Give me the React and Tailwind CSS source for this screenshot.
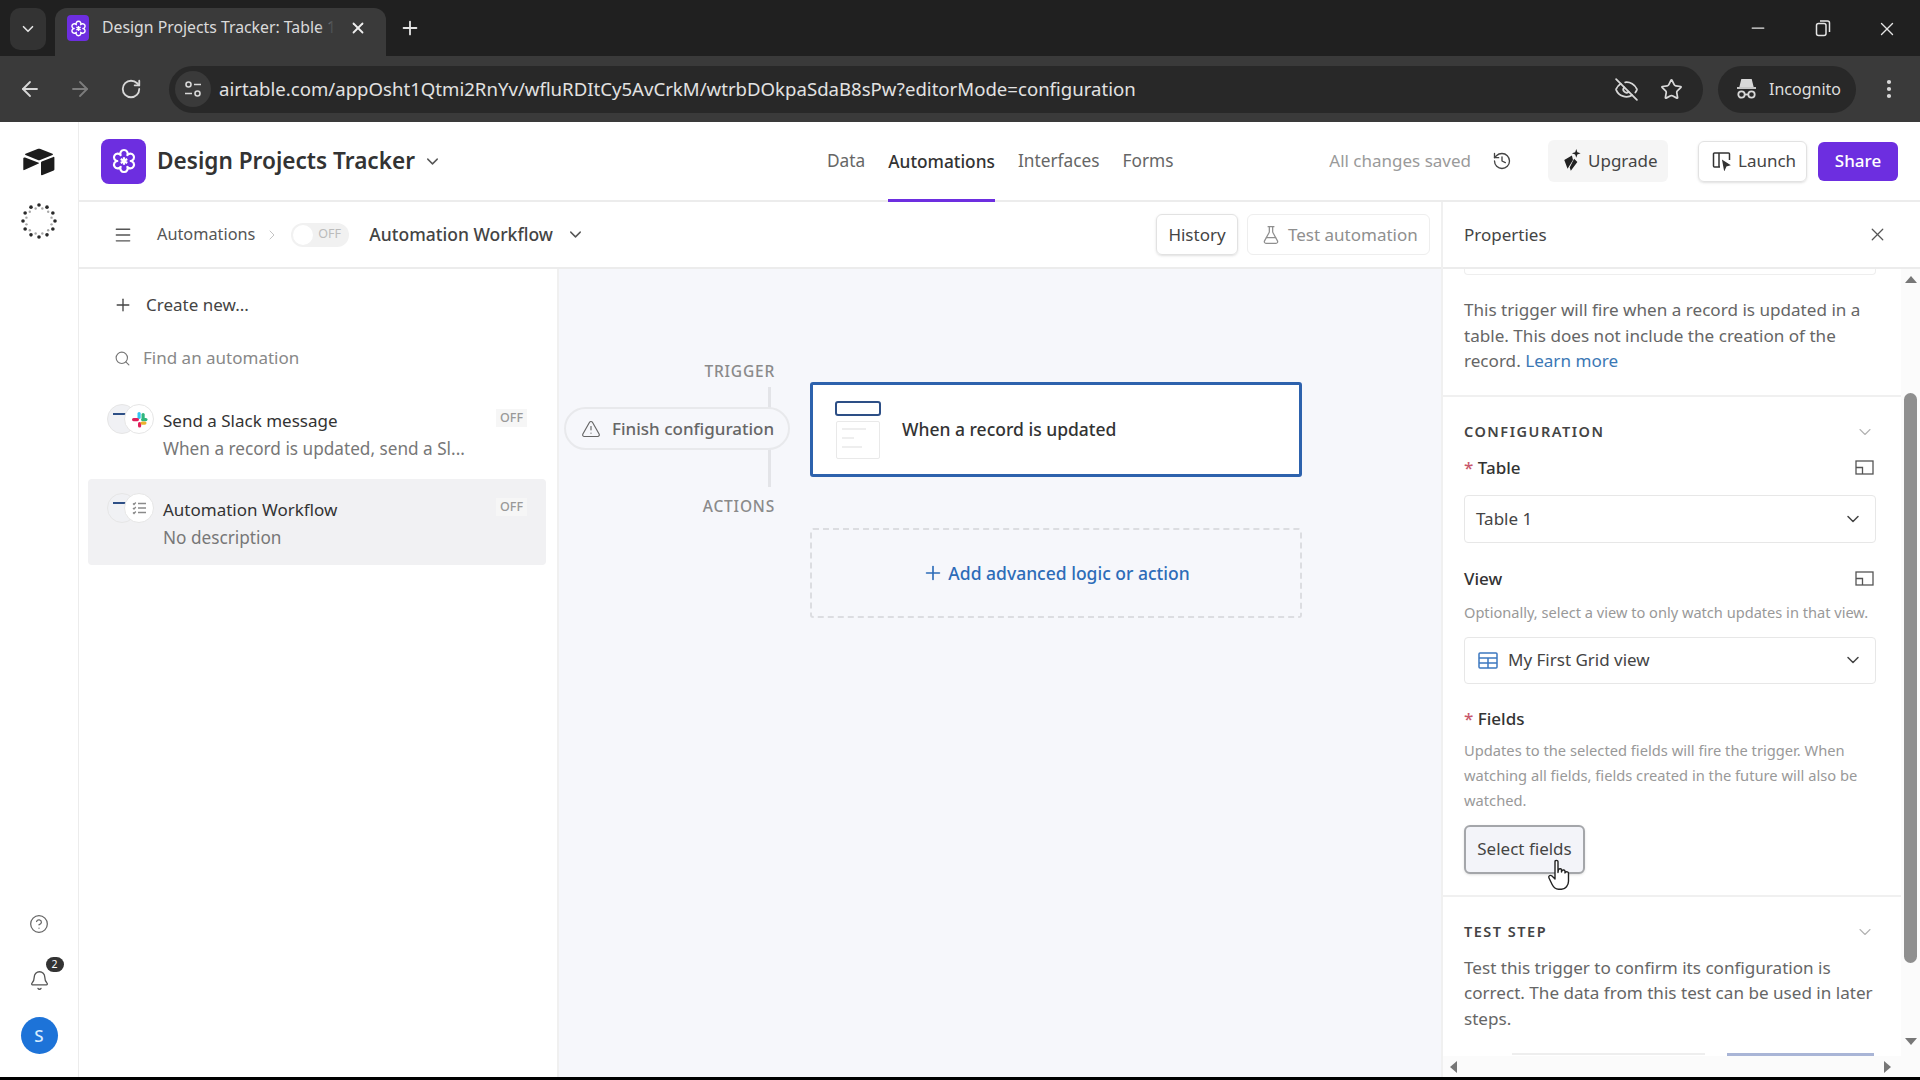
import {
  ArrowLeft, ArrowRight, Bell, ChevronDown, ChevronRight, CircleHelp, EyeOff, FlaskConical, History,
  Menu, Minus, MoreVertical, Plus, RotateCw, Search, Star, TriangleAlert, X,
} from 'lucide-react'

const SANS = { fontFamily: '"Noto Sans", "Open Sans", sans-serif' }

// six petals, arcs running between the valley points
const FLOWER_PATH = Array.from({ length: 7 }, (_, i) => {
  const a = (i * 60 * Math.PI) / 180
  const x = (12 + Math.cos(a) * 6.2).toFixed(2)
  const y = (12 + Math.sin(a) * 6.2).toFixed(2)
  return i === 0 ? `M${x} ${y}` : `A3.400 3.400 0 1 1 ${x} ${y}`
}).join(' ') + 'z'

function FlowerIcon({ size = 26, stroke = 'white' }) {
  return (
    <svg width={size} height={size} viewBox="0 0 24 24" fill="none" stroke={stroke} strokeWidth="2" strokeLinejoin="round">
      <path d={FLOWER_PATH} />
      <path d="M12 8.500v7M9 10.200l6 3.600M15 10.200l-6 3.600" />
    </svg>
  )
}

function AirtableLogo() {
  return (
    <svg width="32" height="28" viewBox="0 0 32 28" fill="#1c1c1c">
      <path d="M14.500 1 2.500 5.800c-.6.3-.6 1 0 1.300l12.300 4.800c.8.300 1.600.3 2.400 0l12.300-4.800c.6-.3.6-1 0-1.300L17.500 1c-1-.4-2-.4-3 0z" />
      <path d="M18 14.500v12c0 .5.500.9 1 .7l11.700-4.700c.4-.2.700-.5.700-1V9.600c0-.6-.6-.9-1-.7L18.700 13.500c-.4.200-.7.500-.7 1z" />
      <path d="M15.300 15 .9 21.500c-.5.200-1 0-1-.6V10c0-.4.200-.6.400-.8L1 8.900c.2-.1.500-.1.700 0l13.600 5.300c.5.200.5.600 0 .8z" transform="translate(.4 .6)" />
    </svg>
  )
}

function Spinner() {
  const dots = Array.from({ length: 12 }, (_, i) => {
    const a = (i / 12) * Math.PI * 2
    return { x: 20 + Math.cos(a) * 16, y: 20 + Math.sin(a) * 16 }
  })
  const inner = Array.from({ length: 12 }, (_, i) => {
    const a = ((i + 0.5) / 12) * Math.PI * 2
    return { x: 20 + Math.cos(a) * 13, y: 20 + Math.sin(a) * 13 }
  })
  return (
    <svg width="40" height="40" viewBox="0 0 40 40">
      {dots.map((d, i) => <circle key={i} cx={d.x} cy={d.y} r="1.800" fill="#2a2a2a" />)}
      {inner.map((d, i) => <circle key={i} cx={d.x} cy={d.y} r="1.200" fill="#a8a8a8" />)}
    </svg>
  )
}

function SlackIcon() {
  return (
    <svg width="17" height="17" viewBox="0 0 17 17">
      <rect x="6.500" y="1" width="3.200" height="7" rx="1.600" fill="#36c5f0" />
      <rect x="1" y="7" width="7" height="3.200" rx="1.600" fill="#e01e5a" />
      <rect x="7" y="11" width="3.200" height="5.500" rx="1.600" fill="#e01e5a" />
      <rect x="10.500" y="2" width="3.200" height="6" rx="1.600" fill="#2eb67d" />
      <rect x="10" y="7" width="6.500" height="3.200" rx="1.600" fill="#2eb67d" />
      <rect x="9.500" y="10.500" width="6" height="3.200" rx="1.600" fill="#ecb22e" />
    </svg>
  )
}

function ListIcon() {
  return (
    <svg width="15" height="14" viewBox="0 0 15 14" fill="none" stroke="#8a8a8a" strokeWidth="1.300">
      <path d="M6 2.500h8M6 7h8M6 11.500h8M1 2.500l1 1 1.800-2M1 7l1 1 1.800-2M1 11.500l1 1 1.800-2" />
    </svg>
  )
}

function StepIcons({ second }) {
  return (
    <div className="relative w-[47px] h-[31px] shrink-0">
      <div className="absolute left-0 top-0 w-[30px] h-[30px] rounded-full bg-[#f0f1f4] border border-[#e6e6e6] overflow-hidden">
        <div className="absolute left-[5px] top-[8px] w-[15px] h-[2px] bg-[#2d4f86]" />
      </div>
      <div className="absolute left-[17px] top-0 w-[30px] h-[30px] rounded-full bg-white border border-[#e6e6e6] flex items-center justify-center">
        {second}
      </div>
    </div>
  )
}

function AutomationRow({ title, desc, icon, active }) {
  return (
    <div className={`ml-[9px] mr-[11px] h-[86px] rounded-[4px] flex items-start pl-[19px] pr-[19px] ${active ? 'mt-[3px] bg-[#f1f1f3]' : ''}`}>
      <div className="mt-[14px]"><StepIcons second={icon} /></div>
      <div className="ml-[9px] flex-1 min-w-0 pt-[17px]">
        <div className="text-[17px] leading-[28px] text-[#333]">{title}</div>
        <div className="text-[17.200px] leading-[28px] text-[#777] whitespace-nowrap">{desc}</div>
      </div>
      <div className="mt-[19px] px-[4px] text-[12.500px] leading-[18px] font-medium text-[#999] bg-[#f6f6f6]">OFF</div>
    </div>
  )
}

function LabelIcon() {
  return (
    <svg width="19" height="15" viewBox="0 0 19 15" fill="none" stroke="#555" strokeWidth="1.300">
      <rect x="1" y="1" width="17" height="13" />
      <path d="M1 7.500h6.500V14" />
    </svg>
  )
}

function SectionTitle({ children }) {
  return (
    <div className="h-[20px] flex items-center justify-between pr-[1px]">
      <span className="text-[14.500px] font-semibold tracking-[1.500px] text-[#444]">{children}</span>
      <ChevronDown size={20} strokeWidth={1.300} className="text-[#b3b3b3]" />
    </div>
  )
}

function SelectBox({ className, children }) {
  return (
    <div className={`border border-[#e7e7e7] rounded-[4px] flex items-center pl-[11px] pr-[12px] text-[17px] text-[#444] ${className}`}>
      {children}
      <ChevronDown size={20} strokeWidth={1.800} className="ml-auto text-[#444]" />
    </div>
  )
}

export default function App() {
  return (
    <div className="w-[1920px] h-[1080px] overflow-hidden flex flex-col bg-white" style={SANS}>
      {/* browser tab strip */}
      <div className="h-[56px] shrink-0 bg-[#202020] flex pt-[8px] pl-[10px] text-[#e4e4e4]">
        <div className="w-[36px] h-[42px] rounded-[10px] bg-[#333] flex items-center justify-center">
          <ChevronDown size={18} strokeWidth={2.200} />
        </div>
        <div className="ml-[9px] w-[331px] h-[48px] rounded-t-[12px] bg-[#3a3a3a] flex items-center pl-[12px] pb-[8px] relative">
          <div className="w-[22px] h-[26px] rounded-[4px] bg-[#6d2ee0] flex items-center justify-center"><FlowerIcon size={17} /></div>
          <div className="ml-[13px] w-[232px] overflow-hidden whitespace-nowrap text-[15.800px] text-[#dadada] relative">
            Design Projects Tracker: Table 1
            <div className="absolute right-0 top-0 bottom-0 w-[16px] bg-gradient-to-r from-transparent to-[#3a3a3a]" />
          </div>
          <X size={18} strokeWidth={2.400} className="ml-[15px] text-[#eee]" />
        </div>
        <Plus size={22} strokeWidth={2} className="ml-[13px] mt-[9px]" />
        <div className="ml-auto flex items-start pt-[10px] pr-[22px]">
          <Minus size={20} strokeWidth={1.500} />
          <svg width="18" height="20" viewBox="0 0 18 20" fill="none" stroke="#e4e4e4" strokeWidth="1.500" className="ml-[46px]">
            <rect x="2.500" y="5.500" width="9.500" height="12" rx="2" />
            <path d="M6 3h7.500a2 2 0 0 1 2 2v9" />
          </svg>
          <X size={22} strokeWidth={1.500} className="ml-[44px]" />
        </div>
      </div>

      {/* browser toolbar */}
      <div className="h-[66px] shrink-0 bg-[#3a3a3a] flex items-center pl-[18px] pr-[18px] text-[#d8d8d8]">
        <ArrowLeft size={24} strokeWidth={1.800} />
        <ArrowRight size={24} strokeWidth={1.800} className="ml-[26px] text-[#7c7c7c]" />
        <RotateCw size={22} strokeWidth={2} className="ml-[28px]" />
        <div className="ml-[27px] w-[1534px] h-[47px] rounded-full bg-[#282828] flex items-center pl-[6px] pr-[20px]">
          <div className="w-[36px] h-[36px] rounded-full bg-[#3a3a3a] flex items-center justify-center">
            <svg width="18" height="18" viewBox="0 0 18 18" fill="none" stroke="#d8d8d8" strokeWidth="1.600">
              <circle cx="4.500" cy="4.500" r="2.500" />
              <path d="M10 4.500h7M1 13.500h7" />
              <circle cx="13.500" cy="13.500" r="2.500" />
            </svg>
          </div>
          <span className="ml-[8px] text-[18.600px] text-[#e2e2e2] whitespace-nowrap">airtable.com/appOsht1Qtmi2RnYv/wfluRDItCy5AvCrkM/wtrbDOkpaSdaB8sPw?editorMode=configuration</span>
          <EyeOff size={25} strokeWidth={1.700} className="ml-auto" />
          <Star size={23} strokeWidth={1.800} className="ml-[21px]" />
        </div>
        <div className="ml-[15px] w-[138px] h-[47px] rounded-full bg-[#282828] flex items-center pl-[18px]">
          <svg width="21" height="22" viewBox="0 0 21 22" fill="none" stroke="#d8d8d8" strokeWidth="1.800">
            <path d="M6 2h9l1.500 6h-12z" fill="#d8d8d8" />
            <path d="M1 10h19" />
            <circle cx="5.500" cy="16.500" r="3.200" />
            <circle cx="15.500" cy="16.500" r="3.200" />
            <path d="M8.700 16.500h3.600" />
          </svg>
          <span className="ml-[12px] text-[16px] text-[#dedede]">Incognito</span>
        </div>
        <MoreVertical size={24} strokeWidth={2.200} className="ml-[21px]" />
      </div>

      <div className="flex-1 min-h-0 flex">
        {/* app rail */}
        <div className="w-[79px] shrink-0 border-r border-[#ececec] flex flex-col items-center pt-[26px] pb-[23px]">
          <AirtableLogo />
          <div className="mt-[25px]"><Spinner /></div>
          <CircleHelp size={20} strokeWidth={1.500} className="mt-auto text-[#666]" />
          <div className="relative mt-[36px]">
            <Bell size={21} strokeWidth={1.500} className="text-[#555]" />
            <div className="absolute -top-[13px] left-[17px] w-[18px] h-[15px] rounded-full bg-[#333] text-white text-[10.500px] leading-[15px] text-center">2</div>
          </div>
          <div className="mt-[26px] w-[37px] h-[37px] rounded-full bg-[#1d73d8] flex items-center justify-center text-[#d6ecff] text-[17px] font-medium">S</div>
        </div>

        <div className="flex-1 min-w-0 flex flex-col">
          {/* app header */}
          <div className="h-[80px] shrink-0 border-b-2 border-[#ececec] flex">
            <div className="w-[748px] shrink-0 flex items-center pl-[22px]">
              <div className="w-[45px] h-[45px] rounded-[8px] bg-[#6d2ee0] flex items-center justify-center"><FlowerIcon /></div>
              <span className="ml-[11px] text-[22.600px] font-semibold text-[#333]">Design Projects Tracker</span>
              <ChevronDown size={19} strokeWidth={1.800} className="ml-[8px] text-[#555]" />
            </div>
            <nav className="flex gap-[23px] text-[17.300px] text-[#666]">
              <span className="flex items-center">Data</span>
              <span className="flex items-center font-medium text-[#333] border-b-[3px] border-[#6d2ee0] relative top-[2px]">Automations</span>
              <span className="flex items-center">Interfaces</span>
              <span className="flex items-center">Forms</span>
            </nav>
            <div className="ml-auto flex items-center pr-[22px]">
              <span className="text-[17px] text-[#9a9a9a]">All changes saved</span>
              <History size={20} strokeWidth={1.600} className="ml-[21px] text-[#444]" />
              <div className="ml-[36px] w-[120px] h-[42px] rounded-[6px] bg-[#f5f5f5] flex items-center pl-[13px] text-[17px] text-[#444]">
                <svg width="24" height="24" viewBox="0 0 22 22" fill="#222">
                  <path d="M14 0l1 3 3 1-3 1-1 3-1-3-3-1 3-1zM3 10l7-4 1 4-5 8zM12 9l3 3-6 8-1-3z" />
                </svg>
                <span className="ml-[3px]">Upgrade</span>
              </div>
              <div className="ml-[30px] w-[109px] h-[41px] rounded-[6px] border border-[#e2e2e2] shadow-sm flex items-center pl-[13px] text-[17px] text-[#444]">
                <svg width="20" height="20" viewBox="0 0 20 20" fill="none" stroke="#333" strokeWidth="1.500">
                  <path d="M8 16H2.500a1 1 0 0 1-1-1V3a1 1 0 0 1 1-1h14a1 1 0 0 1 1 1v6M7 2v14" />
                  <path d="M11 10l6 4-3 .7L12.500 18z" fill="#333" />
                </svg>
                <span className="ml-[6px]">Launch</span>
              </div>
              <div className="ml-[11px] w-[80px] h-[39px] rounded-[6px] bg-[#6d2ee0] flex items-center justify-center text-[17px] font-medium text-white">Share</div>
            </div>
          </div>

          <div className="flex-1 min-h-0 flex">
            <div className="w-[1362px] shrink-0 flex flex-col">
              {/* automation bar */}
              <div className="h-[67px] shrink-0 border-b-2 border-[#ececec] flex items-center pl-[34px] pr-[11px]">
                <Menu size={20} strokeWidth={1.700} className="text-[#555]" />
                <span className="ml-[24px] text-[16.300px] text-[#555]">Automations</span>
                <ChevronRight size={16} strokeWidth={1.500} className="ml-[9px] text-[#c4c4c4]" />
                <div className="ml-[11px] w-[58px] h-[24px] rounded-full bg-[#f1f1f1] flex items-center pl-[2px]">
                  <div className="w-[20px] h-[20px] rounded-full bg-white" />
                  <span className="ml-[5px] text-[12.500px] text-[#bbb]">OFF</span>
                </div>
                <span className="ml-[20px] text-[17.500px] font-medium text-[#444]">Automation Workflow</span>
                <ChevronDown size={19} strokeWidth={1.800} className="ml-[13px] text-[#555]" />
                <div className="ml-auto w-[82px] h-[41px] rounded-[6px] border border-[#e2e2e2] shadow-sm flex items-center justify-center text-[17px] text-[#444]">History</div>
                <div className="ml-[9px] w-[183px] h-[41px] rounded-[6px] border border-[#eeeeee] flex items-center pl-[13px] text-[17px] text-[#8f8f8f]">
                  <FlaskConical size={20} strokeWidth={1.500} />
                  <span className="ml-[7px]">Test automation</span>
                </div>
              </div>

              <div className="flex-1 min-h-0 flex">
                {/* automation list */}
                <div className="w-[480px] shrink-0 border-r-2 border-[#f0f0f0]">
                  <div className="h-[32px] mt-[20px] flex items-center pl-[34px] text-[17px] text-[#444]">
                    <Plus size={20} strokeWidth={1.600} />
                    <span className="ml-[13px]">Create new...</span>
                  </div>
                  <div className="h-[32px] mt-[21px] flex items-center pl-[35px] text-[17px] text-[#888]">
                    <Search size={17} strokeWidth={1.600} className="text-[#777]" />
                    <span className="ml-[12px]">Find an automation</span>
                  </div>
                  <div className="mt-[16px]">
                    <AutomationRow title="Send a Slack message" desc="When a record is updated, send a Sl..." icon={<SlackIcon />} />
                  </div>
                  <AutomationRow active title="Automation Workflow" desc="No description" icon={<ListIcon />} />
                </div>

                {/* canvas */}
                <div className="flex-1 min-w-0 bg-[#f6f7fb] flex pt-[92px]">
                  <div className="w-[251px] shrink-0 flex flex-col items-end pr-[35px] relative">
                    <div className="h-[20px] text-[15.500px] font-medium tracking-[0.8px] leading-[20px] text-[#8a8a8a]">TRIGGER</div>
                    <div className="w-[3px] h-[100px] bg-[#e3e4e8] mr-[4px] mt-[6px]" />
                    <div className="h-[20px] text-[15.500px] font-medium tracking-[0.8px] leading-[20px] text-[#8a8a8a] mt-[9px]">ACTIONS</div>
                    <div className="absolute left-[5px] top-[46px] w-[226px] h-[43px] rounded-full bg-[#f6f7fb] border-2 border-[#e8e9ec] flex items-center pl-[15px] text-[17px] text-[#666]">
                      <TriangleAlert size={20} strokeWidth={1.400} />
                      <span className="ml-[11px] font-medium whitespace-nowrap">Finish configuration</span>
                    </div>
                  </div>
                  <div className="w-[492px] shrink-0 pt-[21px]">
                    <div className="h-[95px] bg-white border-[3px] border-[#2d62ad] rounded-[3px] flex items-center pl-[22px]">
                      <div className="w-[46px]">
                        <div className="h-[15px] rounded-[3px] border-2 border-[#2d4f86]" />
                        <div className="mt-[5px] mx-[1px] h-[38px] border border-[#e9e9e9] rounded-[2px] px-[5px] pt-[6px]">
                          <div className="h-[2px] w-[24px] bg-[#eeeeee]" />
                          <div className="h-[2px] w-[12px] bg-[#eeeeee] mt-[7px]" />
                          <div className="h-[2px] w-[20px] bg-[#eeeeee] mt-[7px]" />
                        </div>
                      </div>
                      <span className="ml-[21px] text-[17.500px] font-medium text-[#333]">When a record is updated</span>
                    </div>
                    <div className="mt-[51px] h-[90px] border-2 border-dashed border-[#dcdde1] rounded-[3px] flex items-center justify-center text-[#2d6cb8] text-[17.500px] font-medium">
                      <Plus size={22} strokeWidth={1.800} />
                      <span className="ml-[4px]">Add advanced logic or action</span>
                    </div>
                  </div>
                </div>
              </div>
            </div>

            {/* properties panel */}
            <div className="flex-1 min-w-0 border-l-2 border-[#f0f0f0] flex flex-col">
              <div className="h-[67px] shrink-0 border-b-2 border-[#ececec] flex items-center pl-[21px] pr-[32px]">
                <span className="text-[17px] text-[#444]">Properties</span>
                <X size={21} strokeWidth={1.400} className="ml-auto text-[#555]" />
              </div>
              <div className="flex-1 min-h-0 flex overflow-hidden">
                <div className="w-[458px] shrink-0 overflow-hidden">
                  <div className="ml-[21px] w-[412px] h-[6px] border-x border-b border-[#eeeeee] rounded-b-[4px]" />
                  <div className="pl-[21px] pr-[25px]">
                    <p className="mt-[22px] text-[17.100px] leading-[25.500px] text-[#666]">
                      This trigger will fire when a record is updated in a table. This does not include the creation of the record. <span className="text-[#3b78b5]">Learn more</span>
                    </p>
                  </div>
                  <div className="mt-[21px] h-[2px] bg-[#f0f0f0]" />
                  <div className="pl-[21px] pr-[25px]">
                    <div className="mt-[25px]"><SectionTitle>CONFIGURATION</SectionTitle></div>
                    <div className="mt-[14px] h-[24px] flex items-center justify-between pr-[2px] text-[17px] font-medium text-[#333]">
                      <span><span className="text-[#c8576b]">* </span>Table</span>
                      <LabelIcon />
                    </div>
                    <SelectBox className="mt-[15px] h-[48px]">Table 1</SelectBox>
                    <div className="mt-[24px] h-[24px] flex items-center justify-between pr-[2px] text-[17px] font-medium text-[#333]">
                      <span>View</span>
                      <LabelIcon />
                    </div>
                    <div className="mt-[11px] h-[20px] text-[14.600px] leading-[20px] text-[#999] whitespace-nowrap">Optionally, select a view to only watch updates in that view.</div>
                    <SelectBox className="mt-[15px] h-[47px]">
                      <svg width="20" height="17" viewBox="0 0 20 17" fill="none" stroke="#3d78c0" strokeWidth="1.500" className="ml-[2px] mr-[10px]">
                        <rect x="1" y="1" width="18" height="15" rx="1" />
                        <path d="M1 6h18M1 11h18M10 6v10" />
                      </svg>
                      My First Grid view
                    </SelectBox>
                    <div className="mt-[23px] h-[24px] flex items-center text-[17px] font-medium text-[#333]">
                      <span><span className="text-[#c8576b]">* </span>Fields</span>
                    </div>
                    <p className="mt-[7px] text-[14.700px] leading-[25px] text-[#999]">
                      Updates to the selected fields will fire the trigger. When watching all fields, fields created in the future will also be watched.
                    </p>
                    <div className="relative mt-[12px] w-[121px] h-[49px] rounded-[6px] border-2 border-[#a4a6aa] bg-[#f3f4f9] flex items-center justify-center text-[17px] text-[#444] shadow-sm">
                      Select fields
                      <svg width="26" height="34" viewBox="0 0 26 34" className="absolute left-[81px] top-[32px]" fill="white" stroke="#222" strokeWidth="1.400" strokeLinejoin="round">
                        <path d="M8 2.500c0-1.500 3-1.500 3 0v11l.5-3c1-1 3-1 3 .5v2l.5-1.500c1-1 3-.5 3 .8v1.700l.5-.8c1-.8 3-.2 3 1v8c0 4-3 8-7 8h-3c-3 0-5-2-6.500-5L2 19c-1-1.800 1-3.500 3-2l3 3z" />
                      </svg>
                    </div>
                  </div>
                  <div className="mt-[21px] h-[2px] bg-[#f0f0f0]" />
                  <div className="pl-[21px] pr-[25px]">
                    <div className="mt-[25px]"><SectionTitle>TEST STEP</SectionTitle></div>
                    <p className="mt-[13px] text-[17.100px] leading-[25.500px] text-[#666]">
                      Test this trigger to confirm its configuration is correct. The data from this test can be used in later steps.
                    </p>
                    <div className="mt-[22px] flex items-start pl-[48px]">
                      <div className="w-[193px] h-[2px] bg-[#eeeeee]" />
                      <div className="ml-[22px] w-[147px] h-[3px] bg-[#a9b5d6]" />
                    </div>
                  </div>
                </div>
                {/* scrollbar */}
                <div className="flex-1 bg-[#fbfbfb] flex flex-col items-center pt-[7px]">
                  <div className="w-0 h-0 border-x-[6px] border-x-transparent border-b-[7px] border-b-[#777]" />
                  <div className="mt-[110px] w-[13px] h-[570px] rounded-full bg-[#8f8f8f]" />
                  <div className="mt-[75px] w-0 h-0 border-x-[6px] border-x-transparent border-t-[7px] border-t-[#777]" />
                </div>
              </div>
              {/* horizontal scrollbar */}
              <div className="h-[21px] shrink-0 bg-[#fbfbfb] flex items-center pl-[7px] pr-[29px]">
                <div className="w-0 h-0 border-y-[6px] border-y-transparent border-r-[7px] border-r-[#777]" />
                <div className="ml-auto w-0 h-0 border-y-[6px] border-y-transparent border-l-[7px] border-l-[#777]" />
              </div>
            </div>
          </div>
        </div>
      </div>
      <div className="h-[3px] shrink-0 bg-black" />
    </div>
  )
}
